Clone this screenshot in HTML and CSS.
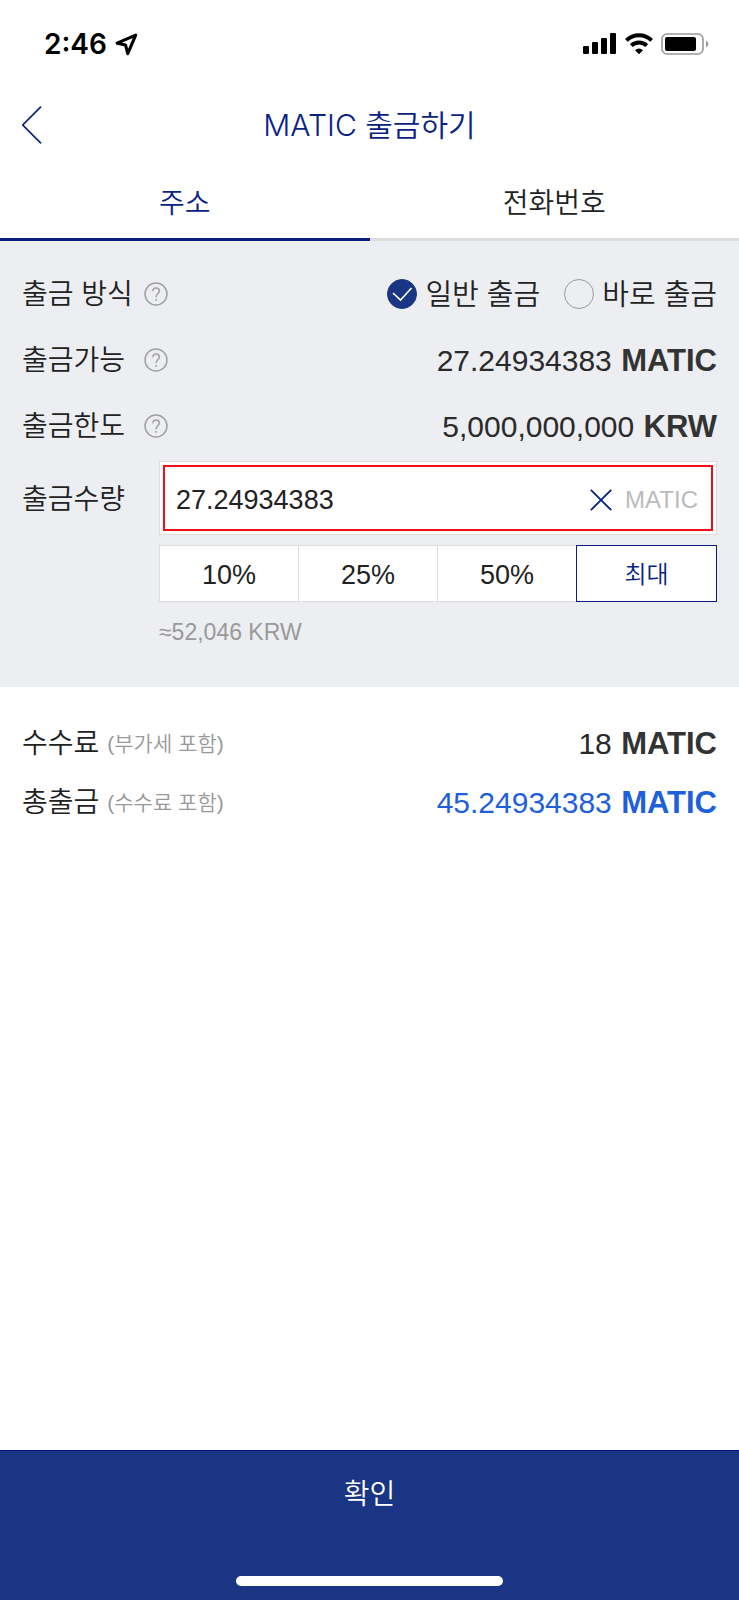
FILE: index.html
```html
<!DOCTYPE html>
<html lang="ko">
<head>
<meta charset="utf-8">
<meta name="viewport" content="width=device-width, initial-scale=1">
<title>MATIC 출금하기</title>
<link rel="stylesheet" href="styles.css">
</head>
<body>
<div class="screen">
  <div class="status">
    <div class="status-group">
      <span class="clock">2:46</span>
      <svg class="location" width="23" height="23" viewBox="0 0 24 24" aria-hidden="true"><path d="M21.6 2.2 2.2 10.6 11 12.4 13.3 21.6Z" fill="none" stroke="#000" stroke-width="3.2" stroke-linejoin="round"/></svg>
    </div>
    <div class="status-group">
      <svg width="34" height="22" viewBox="0 0 34 22" aria-hidden="true"><rect x="0" y="13" width="6" height="8" rx="1"/><rect x="9" y="9" width="6" height="12" rx="1"/><rect x="18" y="5" width="6" height="16" rx="1"/><rect x="27" y="0" width="6" height="21" rx="1"/></svg>
      <svg class="wifi" width="28" height="22" viewBox="0 0 28 22" aria-hidden="true"><g fill="none" stroke="#000" stroke-width="4"><path d="M1.4 7.4A18 18 0 0 1 26.6 7.4"/><path d="M6.3 12.6A11 11 0 0 1 21.7 12.6"/></g><path d="M10 17.3Q14 13.8 18 17.3L14 21.3Z"/></svg>
      <svg width="48" height="22" viewBox="0 0 48 22" aria-hidden="true"><rect x="1" y="1" width="41" height="20" rx="5" fill="none" stroke="#999" stroke-width="1.6"/><rect x="4" y="4" width="31" height="14" rx="2"/><path d="M45 7.5Q47.4 9 47.4 11T45 14.5Z" fill="#999"/></svg>
    </div>
  </div>

  <header class="header">
    <button class="back" type="button" aria-label="뒤로"><svg width="20" height="38" viewBox="0 0 20 38" aria-hidden="true"><path d="M19 .7 .8 19 19 37.3" fill="none" stroke="#0a2383" stroke-width="1.7"/></svg></button>
    <h1 class="title">MATIC 출금하기</h1>
  </header>

  <nav class="tabs">
    <button class="tab tab-active" type="button">주소</button>
    <button class="tab" type="button">전화번호</button>
  </nav>

  <main>
    <section class="panel">
      <div class="row">
        <div class="name"><span class="label">출금 방식</span><button class="help" type="button" aria-label="출금 방식 도움말"><svg width="24" height="24" viewBox="0 0 24 24" aria-hidden="true"><circle cx="12" cy="12" r="11"/><path d="M8.8 9.3C8.8 7.2 10.1 6.1 12 6.1S15.3 7.3 15.3 9C15.3 11.8 12.1 11.8 12.1 15.2M12.1 17v1.8"/></svg></button></div>
        <div class="choices">
          <label class="choice"><input class="radio" type="radio" name="method" checked><span class="label">일반 출금</span></label>
          <label class="choice"><input class="radio" type="radio" name="method"><span class="label">바로 출금</span></label>
        </div>
      </div>
      <div class="row">
        <div class="name"><span class="label">출금가능</span><button class="help" type="button" aria-label="출금가능 도움말"><svg width="24" height="24" viewBox="0 0 24 24" aria-hidden="true"><circle cx="12" cy="12" r="11"/><path d="M8.8 9.3C8.8 7.2 10.1 6.1 12 6.1S15.3 7.3 15.3 9C15.3 11.8 12.1 11.8 12.1 15.2M12.1 17v1.8"/></svg></button></div>
        <div class="value">27.24934383 <b>MATIC</b></div>
      </div>
      <div class="row">
        <div class="name"><span class="label">출금한도</span><button class="help" type="button" aria-label="출금한도 도움말"><svg width="24" height="24" viewBox="0 0 24 24" aria-hidden="true"><circle cx="12" cy="12" r="11"/><path d="M8.8 9.3C8.8 7.2 10.1 6.1 12 6.1S15.3 7.3 15.3 9C15.3 11.8 12.1 11.8 12.1 15.2M12.1 17v1.8"/></svg></button></div>
        <div class="value">5,000,000,000 <b>KRW</b></div>
      </div>
      <div class="amount">
        <label class="amount-label" for="amount">출금수량</label>
        <div class="amount-body">
          <div class="box">
            <div class="field">
              <input class="input" id="amount" type="text" inputmode="decimal" value="27.24934383">
              <button class="clear" type="button" aria-label="지우기"><svg width="22" height="22" viewBox="0 0 22 22" aria-hidden="true"><path d="M.8.8 21.2 21.2M21.2.8.8 21.2" stroke="#0a2383" stroke-width="1.8"/></svg></button>
              <span class="unit">MATIC</span>
            </div>
          </div>
          <div class="ratios">
            <button class="ratio" type="button">10%</button>
            <button class="ratio" type="button">25%</button>
            <button class="ratio" type="button">50%</button>
            <button class="ratio ratio-active" type="button">최대</button>
          </div>
          <p class="approx">≈52,046 KRW</p>
        </div>
      </div>
    </section>

    <section class="summary">
      <div class="sum-row">
        <div class="sum-name"><span>수수료</span><small class="note">(부가세 포함)</small></div>
        <div class="value">18 <b>MATIC</b></div>
      </div>
      <div class="sum-row">
        <div class="sum-name"><span>총출금</span><small class="note">(수수료 포함)</small></div>
        <div class="value value-total">45.24934383 <b>MATIC</b></div>
      </div>
    </section>
  </main>

  <footer class="footer">
    <button class="confirm" type="button">확인</button>
    <div class="home-bar"></div>
  </footer>
</div>
</body>
</html>
```
FILE: styles.css
```css
* {
  box-sizing: border-box;
}

body {
  margin: 0;
  background: #fff;
  color: #222;
  font-family: "Liberation Sans", "Noto Sans CJK KR", sans-serif;
  font-size: 28px;
  font-weight: 350;
  line-height: 40px;
}

button,
input {
  margin: 0;
  padding: 0;
  border: 0;
  background: none;
  color: inherit;
  font: inherit;
}

svg {
  display: block;
}

.screen {
  display: flex;
  flex-direction: column;
  min-height: 100vh;
}

.status {
  display: flex;
  justify-content: space-between;
  align-items: center;
  height: 88px;
  padding: 0 30px 0 44px;
}

.status-group {
  display: flex;
  align-items: center;
  gap: 8px;
}

.clock {
  color: #000;
  font-family: Inter, sans-serif;
  font-size: 28px;
  font-weight: 600;
}

.header {
  display: grid;
  grid-template-columns: 60px 1fr 60px;
  align-items: center;
  height: 73px;
  padding: 0 22px;
}

.title {
  margin: 0;
  color: #0a2383;
  font-family: Inter, "Noto Sans CJK KR", sans-serif;
  font-size: 30px;
  font-weight: 350;
  text-align: center;
}

.tabs {
  display: grid;
  grid-template-columns: 1fr 1fr;
}

.tab {
  height: 80px;
  padding-top: 8px;
  border-bottom: 3px solid #dcdcdc;
}

.tab-active {
  border-color: #0a1c80;
  color: #0a2383;
}

.panel {
  padding: 20px 22px 34px;
  background: #edeef2;
}

.row {
  display: flex;
  justify-content: space-between;
  align-items: center;
  height: 66px;
}

.name {
  display: flex;
  justify-content: space-between;
  align-items: center;
  width: 146px;
}

.label {
  padding-top: 2px;
}

.help svg {
  fill: none;
  stroke: #a0a0a0;
  stroke-width: 1.5;
}

.choices {
  display: flex;
  gap: 24px;
  font-size: 29px;
}

.choice {
  display: flex;
  align-items: center;
  gap: 8px;
}

.radio {
  appearance: none;
  width: 30px;
  height: 30px;
  border: 1px solid #999;
  border-radius: 50%;
}

.radio:checked {
  border-color: #193583;
  background: #193583 url("data:image/svg+xml,%3Csvg xmlns='http://www.w3.org/2000/svg' viewBox='0 0 30 30'%3E%3Cpath d='M6 14 13.500 21 24.500 9' fill='none' stroke='white' stroke-width='1.700'/%3E%3C/svg%3E") center / 30px 30px;
}

.value {
  padding-top: 2px;
  color: #2a2a2a;
  font-size: 30px;
}

.value b {
  margin-left: 1px;
  color: #333;
  font-size: 31px;
  font-weight: 700;
}

.value-total,
.value-total b {
  color: #1e5fdc;
}

.amount {
  display: grid;
  grid-template-columns: 137px 1fr;
  margin-top: 2px;
}

.amount-label {
  padding-top: 19px;
}

.box {
  padding: 3px;
  border: 1px solid #dcdcdc;
  background: #fff;
}

.field {
  display: flex;
  align-items: center;
  height: 66px;
  padding: 4px 13px 0 11px;
  border: 2px solid #f20d18;
}

.input {
  flex: 1;
  min-width: 0;
  height: 56px;
  font-size: 27px;
  outline: 0;
}

.clear {
  margin-right: 13px;
}

.unit {
  color: #bbb;
  font-size: 24px;
}

.ratios {
  display: grid;
  grid-template-columns: repeat(4, 1fr);
  margin-top: 10px;
  border: 1px solid #dcdcdc;
  background: #fff;
}

.ratio {
  height: 55px;
  padding-top: 2px;
  border-right: 1px solid #dcdcdc;
  font-size: 27px;
}

.ratio-active {
  margin: -1px;
  height: 57px;
  border: 1px solid #0a1c80;
  color: #0a2383;
  font-size: 24px;
}

.approx {
  margin: 10px 0 0;
  color: #999;
  font-size: 23px;
  line-height: 41px;
}

.summary {
  padding: 26px 22px;
}

.sum-row {
  display: flex;
  justify-content: space-between;
  align-items: center;
  height: 59px;
}

.sum-name {
  display: flex;
  align-items: center;
  gap: 8px;
  padding-top: 3px;
}

.note {
  color: #999;
  font-size: 21px;
}

.footer {
  display: flex;
  flex-direction: column;
  align-items: center;
  justify-content: space-between;
  height: 150px;
  margin-top: auto;
  padding-bottom: 14px;
  border-top: 1px solid #00107a;
  background: #193583;
}

.confirm {
  width: 100%;
  height: 88px;
  color: #fff;
}

.home-bar {
  width: 36%;
  height: 10px;
  border-radius: 5px;
  background: #fff;
}
```
